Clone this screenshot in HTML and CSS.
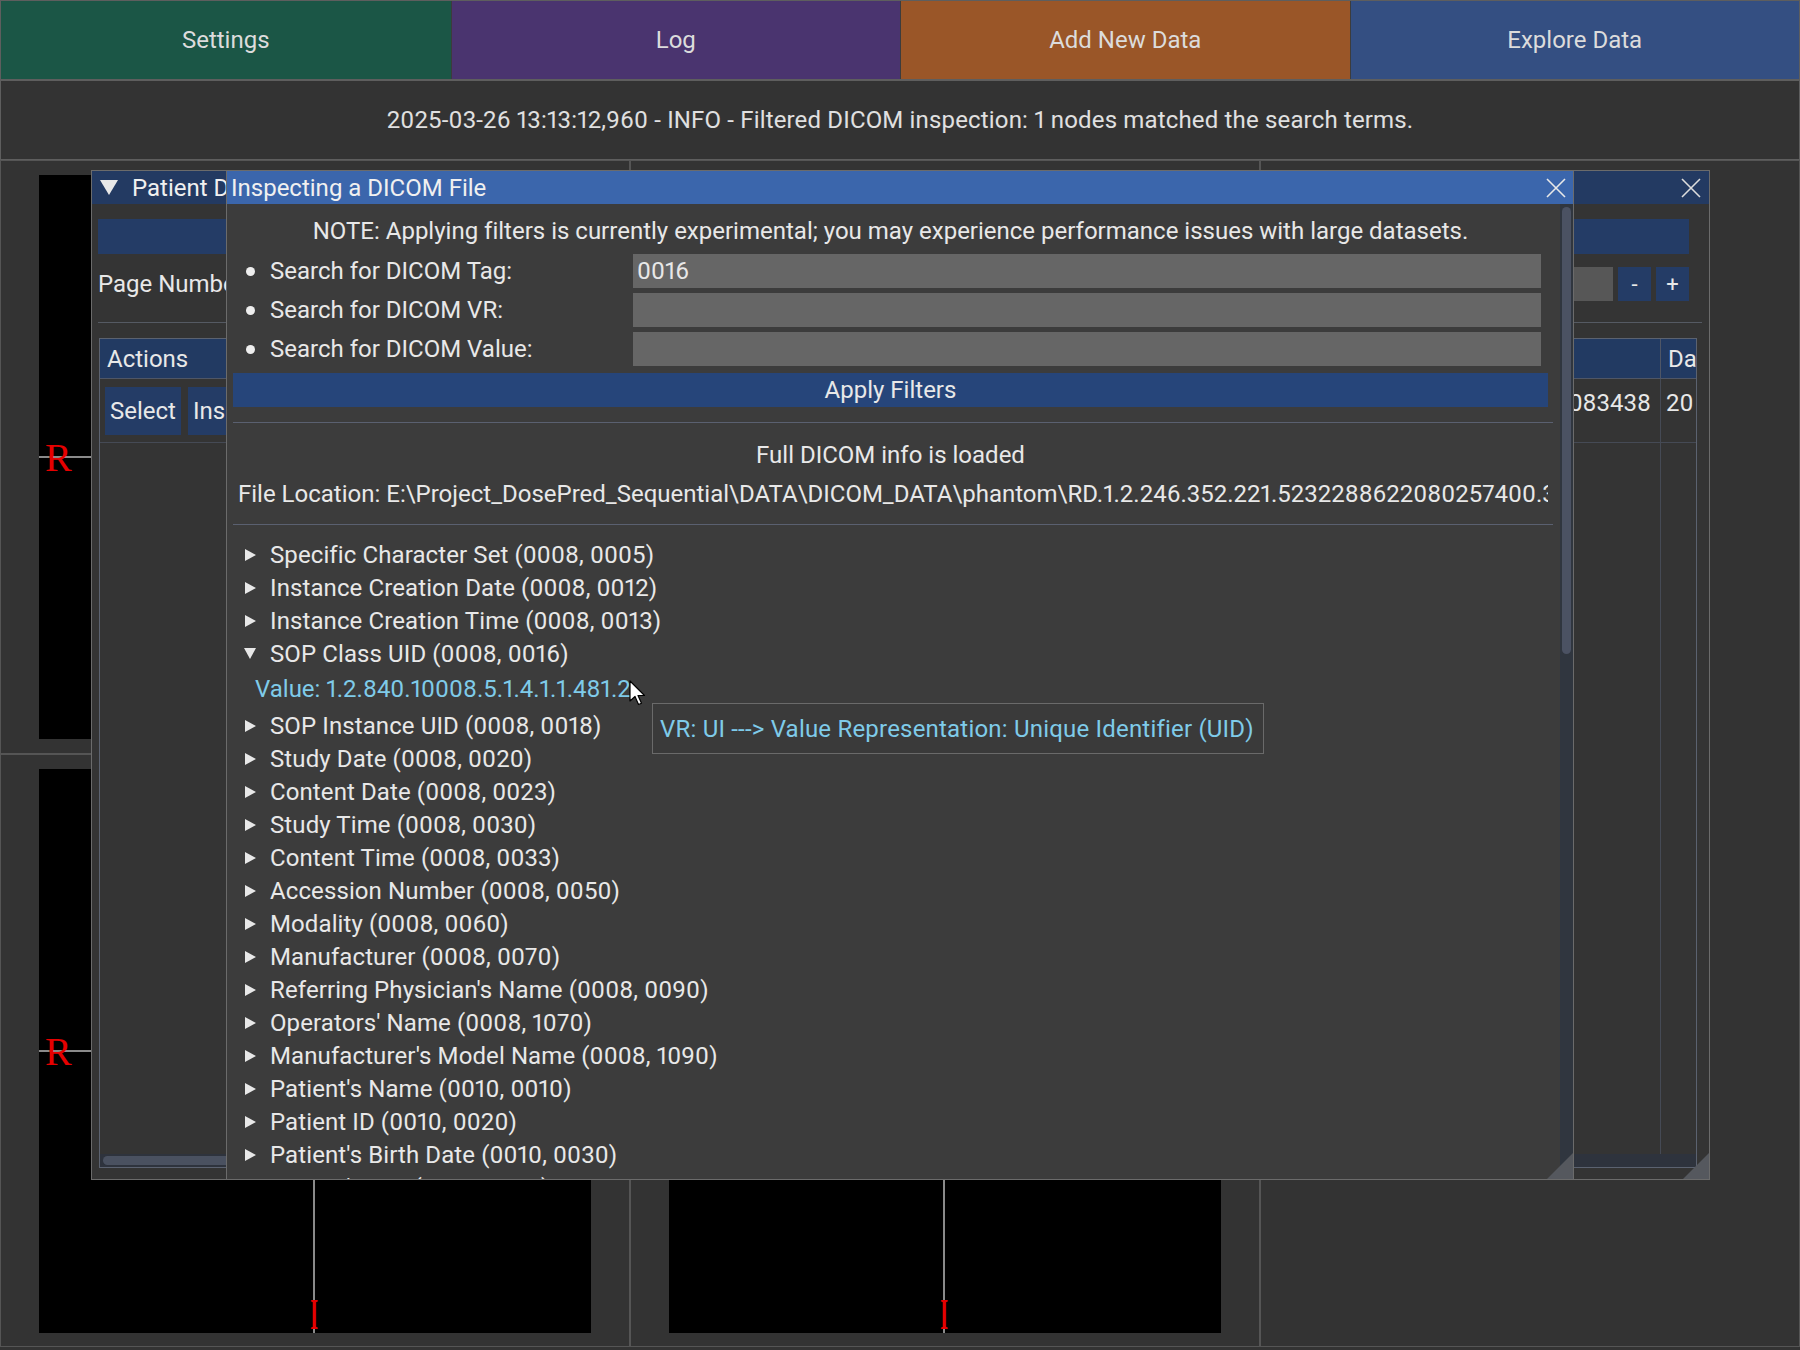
FILE: index.html
```html
<!DOCTYPE html>
<html>
<head>
<meta charset="utf-8">
<title>DICOM Inspector</title>
<link rel="stylesheet" href="styles.css">
</head>
<body>
<div class="app">
  <div class="topbar">
    <div class="tab tab-settings">Settings</div>
    <div class="tab tab-log">Log</div>
    <div class="tab tab-add">Add New Data</div>
    <div class="tab tab-explore">Explore Data</div>
  </div>
  <div class="logbar">2025-03-26 13:13:12,960 - INFO - Filtered DICOM inspection: 1 nodes matched the search terms.</div>
  <div class="panels">
    <div class="panel">
      <div class="view"><div class="hline"></div><div class="vline"></div><span class="mark-r">R</span><span class="mark-i">I</span></div>
    </div>
    <div class="panel">
      <div class="view"><div class="hline"></div><div class="vline"></div><span class="mark-r">R</span><span class="mark-i">I</span></div>
    </div>
    <div class="panel panel-side"></div>
    <div class="panel">
      <div class="view"><div class="hline"></div><div class="vline"></div><span class="mark-r">R</span><span class="mark-i">I</span></div>
    </div>
    <div class="panel">
      <div class="view"><div class="hline"></div><div class="vline"></div><span class="mark-r">R</span><span class="mark-i">I</span></div>
    </div>
  </div>

  <div class="win patient">
    <div class="titlebar tb-inactive">
      <span class="tri-down"></span>
      <span class="title">Patient Data Explorer</span>
      <svg class="close" width="20" height="20" viewBox="0 0 20 20"><path d="M1 1 L19 19 M19 1 L1 19" stroke="#dcdcdc" stroke-width="1.6" fill="none"/></svg>
    </div>
    <div class="pbody">
      <div class="pbar"></div>
      <div class="pagerow">
        <span class="plabel">Page Number:</span>
        <div class="pinput"></div>
        <div class="sbtn">-</div>
        <div class="sbtn">+</div>
      </div>
      <div class="psep"></div>
      <div class="ptable">
        <div class="th">Actions</div>
        <div class="th"></div>
        <div class="th">Patient ID</div>
        <div class="th">Date</div>
        <div class="td td-actions"><span class="tbtn">Select</span><span class="tbtn">Inspect</span></div>
        <div class="td"></div>
        <div class="td td-num">25032600083438</div>
        <div class="td td-date">20</div>
        <div class="tf"></div>
        <div class="tf"></div>
        <div class="tf"></div>
        <div class="tf"></div>
      </div>
      <div class="hscroll"><div class="hgrab"></div></div>
    </div>
    <div class="grip"></div>
  </div>

  <div class="win modal">
    <div class="titlebar tb-active">
      <span class="title">Inspecting a DICOM File</span>
      <svg class="close" width="20" height="20" viewBox="0 0 20 20"><path d="M1 1 L19 19 M19 1 L1 19" stroke="#e8e8e8" stroke-width="1.6" fill="none"/></svg>
    </div>
    <div class="mbody">
      <div class="mcontent">
        <div class="note">NOTE: Applying filters is currently experimental; you may experience performance issues with large datasets.</div>
        <div class="frow frow-first"><span class="bullet"></span><span class="flabel">Search for DICOM Tag:</span><div class="finput">0016</div></div>
        <div class="frow"><span class="bullet"></span><span class="flabel">Search for DICOM VR:</span><div class="finput"></div></div>
        <div class="frow"><span class="bullet"></span><span class="flabel">Search for DICOM Value:</span><div class="finput"></div></div>
        <div class="applybtn">Apply Filters</div>
        <div class="msep"></div>
        <div class="cline">Full DICOM info is loaded</div>
        <div class="fileloc">File Location: E:\Project_DosePred_Sequential\DATA\DICOM_DATA\phantom\RD.1.2.246.352.221.5232288622080257400.3</div>
        <div class="msep msep-2"></div>
        <div class="tree">
          <div class="node"><span class="arrow-r"></span>Specific Character Set (0008, 0005)</div>
          <div class="node"><span class="arrow-r"></span>Instance Creation Date (0008, 0012)</div>
          <div class="node"><span class="arrow-r"></span>Instance Creation Time (0008, 0013)</div>
          <div class="node"><span class="arrow-d"></span>SOP Class UID (0008, 0016)</div>
          <div class="value">Value: 1.2.840.10008.5.1.4.1.1.481.2</div>
          <div class="node"><span class="arrow-r"></span>SOP Instance UID (0008, 0018)</div>
          <div class="node"><span class="arrow-r"></span>Study Date (0008, 0020)</div>
          <div class="node"><span class="arrow-r"></span>Content Date (0008, 0023)</div>
          <div class="node"><span class="arrow-r"></span>Study Time (0008, 0030)</div>
          <div class="node"><span class="arrow-r"></span>Content Time (0008, 0033)</div>
          <div class="node"><span class="arrow-r"></span>Accession Number (0008, 0050)</div>
          <div class="node"><span class="arrow-r"></span>Modality (0008, 0060)</div>
          <div class="node"><span class="arrow-r"></span>Manufacturer (0008, 0070)</div>
          <div class="node"><span class="arrow-r"></span>Referring Physician's Name (0008, 0090)</div>
          <div class="node"><span class="arrow-r"></span>Operators' Name (0008, 1070)</div>
          <div class="node"><span class="arrow-r"></span>Manufacturer's Model Name (0008, 1090)</div>
          <div class="node"><span class="arrow-r"></span>Patient's Name (0010, 0010)</div>
          <div class="node"><span class="arrow-r"></span>Patient ID (0010, 0020)</div>
          <div class="node"><span class="arrow-r"></span>Patient's Birth Date (0010, 0030)</div>
          <div class="node"><span class="arrow-r"></span>Patient's Sex (0010, 0040)</div>
        </div>
      </div>
      <div class="vscroll"><div class="vgrab"></div></div>
    </div>
    <div class="grip"></div>
  </div>

  <div class="tooltip">VR: UI ---&gt; Value Representation: Unique Identifier (UID)</div>

  <svg class="cursor" width="20" height="28" viewBox="0 0 20 28"><path d="M1 1 L1 21 L6 16.5 L9.5 24.5 L12.5 23.2 L9 15.5 L15.5 15.5 Z" fill="#ffffff" stroke="#000000" stroke-width="1.2" stroke-linejoin="round"/></svg>
</div>
</body>
</html>
```
FILE: styles.css
```css
* { box-sizing: border-box; }
html, body { margin: 0; padding: 0; }
body {
  width: 1800px;
  height: 1350px;
  overflow: hidden;
  background: #333333;
  font-family: Roboto, "Liberation Sans", sans-serif;
  font-size: 24px;
  font-variant-numeric: proportional-nums;
  font-variant-ligatures: none;
  color: #e8e8e8;
}
.app {
  position: relative;
  width: 1800px;
  height: 1350px;
  display: flex;
  flex-direction: column;
}

/* top tabs */
.topbar {
  display: grid;
  grid-template-columns: repeat(4, 1fr);
  height: 80px;
  border: 1px solid #5e5e5e;
}
.tab {
  display: flex;
  align-items: center;
  justify-content: center;
  color: #dcdcdc;
}
.tab + .tab { border-left: 1px solid #3c3c3c; }
.tab-settings { background: #1b5646; }
.tab-log { background: #4a346f; }
.tab-add { background: #9a5628; }
.tab-explore { background: #344f82; }

/* log line */
.logbar {
  height: 80px;
  border: 1px solid #5e5e5e;
  display: flex;
  align-items: center;
  justify-content: center;
  color: #e0e0e0;
  letter-spacing: 0.16px;
}

/* background panels */
.panels {
  flex: 1;
  display: grid;
  grid-template-columns: 630px 630px 1fr;
  grid-template-rows: 594px 593px;
}
.panel {
  border: 1px solid #555555;
  display: flex;
  justify-content: center;
  padding-top: 14px;
}
.panel-side { grid-column: 3; grid-row: 1 / span 2; }
.view {
  position: relative;
  width: 552px;
  height: 564px;
  background: #000000;
}
.hline {
  position: absolute;
  left: 0;
  right: 0;
  top: 281px;
  height: 2px;
  background: #8a8a8a;
}
.vline {
  position: absolute;
  top: 0;
  bottom: 0;
  left: 274px;
  width: 2px;
  background: #8a8a8a;
}
.mark-r {
  position: absolute;
  left: 6px;
  top: 263px;
  font-family: "Liberation Serif", serif;
  font-size: 40px;
  line-height: 40px;
  color: #e60000;
}
.mark-i {
  position: absolute;
  left: 275px;
  top: 524px;
  font-family: "Liberation Serif", serif;
  font-weight: bold;
  font-size: 44px;
  line-height: 44px;
  color: #e60000;
  transform: translateX(-50%) scaleX(0.45);
}

/* windows */
.win {
  position: absolute;
  top: 170px;
  height: 1010px;
  border: 1px solid #6b6b6b;
  display: flex;
  flex-direction: column;
  overflow: hidden;
}
.titlebar {
  height: 33px;
  flex: none;
  display: flex;
  align-items: center;
  position: relative;
}
.tb-inactive { background: #233a62; }
.tb-active { background: #3b66ac; }
.title { color: #f0f0f0; white-space: nowrap; }
.close {
  position: absolute;
  top: 7px;
}
.grip {
  position: absolute;
  right: 0;
  bottom: 0;
  width: 26px;
  height: 26px;
  background: #55585e;
  clip-path: polygon(100% 0, 100% 100%, 0 100%);
}

/* patient window */
.patient {
  left: 91px;
  width: 1619px;
  background: #343434;
}
.patient .titlebar { padding-left: 8px; }
.patient .close { right: 8px; }
.tri-down {
  width: 0;
  height: 0;
  border-left: 9px solid transparent;
  border-right: 9px solid transparent;
  border-top: 15px solid #e8e8e8;
  margin-right: 14px;
}
.pbody {
  flex: 1;
  display: flex;
  flex-direction: column;
  padding: 0 0 0 6px;
}
.pbar {
  margin-top: 15px;
  width: 1591px;
  height: 35px;
  background: #243c66;
}
.pagerow {
  margin-top: 13px;
  height: 34px;
  display: flex;
  align-items: center;
  gap: 5px;
}
.plabel { width: 320px; white-space: nowrap; }
.pinput {
  width: 1190px;
  height: 34px;
  background: #575757;
}
.sbtn {
  width: 33px;
  height: 34px;
  background: #243c66;
  display: flex;
  align-items: center;
  justify-content: center;
  font-size: 22px;
}
.psep {
  margin-top: 21px;
  width: 1604px;
  height: 1px;
  background: #555a63;
}
.ptable {
  margin-top: 15px;
  margin-left: 1px;
  width: 1598px;
  height: 816px;
  border: 1px solid #5b6270;
  border-bottom: none;
  display: grid;
  grid-template-columns: 200px 1099px 262px 35px;
  grid-template-rows: 40px 64px 1fr;
  overflow: hidden;
}
.th {
  background: #223a62;
  border-right: 1px solid #4f5666;
  border-bottom: 1px solid #4f5666;
  padding-left: 7px;
  display: flex;
  align-items: center;
  white-space: nowrap;
  overflow: hidden;
}
.td {
  border-right: 1px solid #454a55;
  border-bottom: 1px solid #454a55;
  white-space: nowrap;
  overflow: hidden;
}
.th:nth-child(4n), .td:nth-child(4n), .tf:nth-child(4n) { border-right: none; }
.td-actions {
  display: flex;
  align-items: center;
  gap: 7px;
  padding-left: 5px;
}
.tbtn {
  height: 48px;
  padding: 0 5px;
  background: #243c66;
  display: flex;
  align-items: center;
}
.td-num {
  text-align: right;
  padding: 7px 9px 0 0;
  line-height: 34px;
}
.td-date {
  padding: 7px 0 0 5px;
  line-height: 34px;
}
.tf { border-right: 1px solid #454a55; }
.hscroll {
  margin-left: 1px;
  width: 1598px;
  height: 14px;
  background: #2e333d;
  border: 1px solid #5b6270;
  border-top: none;
  padding: 2px 3px;
}
.hgrab {
  width: 900px;
  height: 9px;
  border-radius: 5px;
  background: #4a5160;
}

/* modal */
.modal {
  left: 226px;
  width: 1348px;
  background: #3c3c3c;
}
.modal .titlebar { padding-left: 4px; }
.modal .close { right: 7px; }
.mbody {
  flex: 1;
  position: relative;
  overflow: hidden;
}
.mcontent {
  width: 1321px;
  padding-left: 6px;
  display: flex;
  flex-direction: column;
}
.note {
  margin-top: 10px;
  height: 34px;
  line-height: 34px;
  text-align: center;
  white-space: nowrap;
}
.frow {
  margin-top: 5px;
  height: 34px;
  display: flex;
  align-items: center;
}
.frow-first { margin-top: 6px; }
.bullet {
  width: 9px;
  height: 9px;
  border-radius: 50%;
  background: #eeeeee;
  margin-left: 13px;
  margin-right: 15px;
  flex: none;
}
.flabel { width: 363px; white-space: nowrap; }
.finput {
  width: 908px;
  height: 34px;
  background: #666666;
  padding-left: 4px;
  line-height: 34px;
}
.applybtn {
  margin-top: 7px;
  height: 34px;
  background: #26457a;
  display: flex;
  align-items: center;
  justify-content: center;
}
.msep {
  margin-top: 15px;
  width: 1320px;
  height: 1px;
  background: #5a6070;
}
.msep-2 { margin-top: 13px; }
.cline {
  margin-top: 15px;
  height: 34px;
  line-height: 34px;
  text-align: center;
}
.fileloc {
  margin-top: 5px;
  height: 34px;
  line-height: 34px;
  padding-left: 5px;
  white-space: nowrap;
  overflow: hidden;
}
.tree {
  margin-top: 13px;
  display: flex;
  flex-direction: column;
  letter-spacing: 0.1px;
}
.node {
  height: 33px;
  display: flex;
  align-items: center;
  white-space: nowrap;
}
.arrow-r {
  width: 0;
  height: 0;
  border-top: 6px solid transparent;
  border-bottom: 6px solid transparent;
  border-left: 11px solid #e8e8e8;
  margin-left: 12px;
  margin-right: 14px;
}
.arrow-d {
  width: 0;
  height: 0;
  border-left: 6px solid transparent;
  border-right: 6px solid transparent;
  border-top: 11px solid #e8e8e8;
  margin-left: 11px;
  margin-right: 14px;
}
.value {
  height: 39px;
  line-height: 39px;
  padding-left: 22px;
  color: #7fcbe9;
  white-space: nowrap;
  letter-spacing: 0;
}
.vscroll {
  position: absolute;
  top: 0;
  right: 0;
  bottom: 0;
  width: 13px;
  background: #30363f;
}
.vgrab {
  margin: 3px 0 0 2px;
  width: 9px;
  height: 447px;
  border-radius: 5px;
  background: #4b5263;
}

/* tooltip & cursor */
.tooltip {
  position: absolute;
  left: 652px;
  top: 703px;
  width: 612px;
  height: 51px;
  border: 1px solid #6a6a6a;
  background: #3a3a3a;
  color: #7fcbe9;
  padding-left: 7px;
  display: flex;
  align-items: center;
  white-space: nowrap;
  letter-spacing: 0.2px;
}
.cursor {
  position: absolute;
  left: 629px;
  top: 680px;
}
```
